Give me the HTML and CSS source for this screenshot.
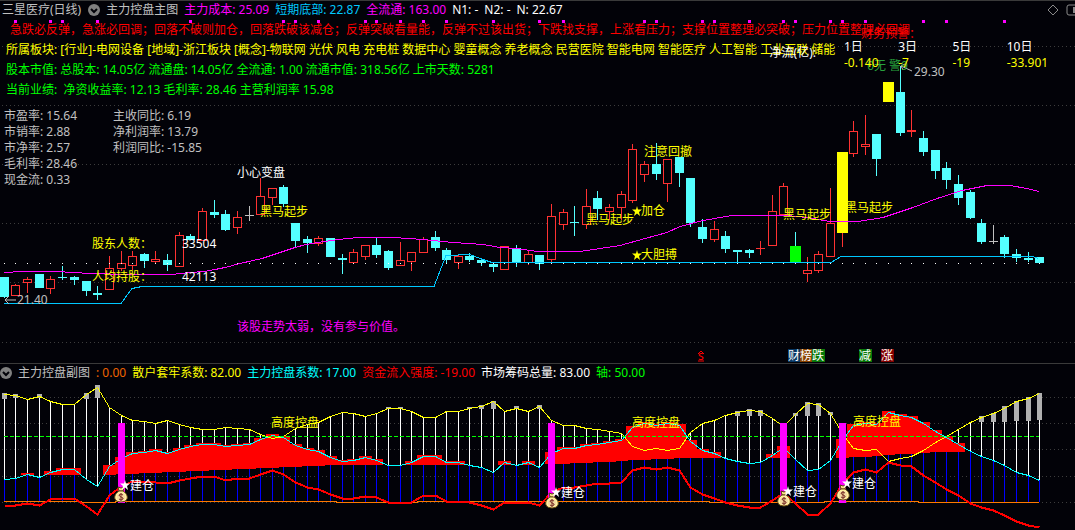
FILE: index.html
```html
<!DOCTYPE html>
<html lang="zh-CN">
<head>
<meta charset="utf-8">
<title>三星医疗 日线</title>
<link rel="stylesheet" href="styles.css">
</head>
<body>
<main class="terminal">
  <section class="panel" aria-label="主力控盘主图">
    <svg class="chart" id="price" viewBox="0 0 1075 363" role="img" aria-label="日K线">
      <g id="price-series"></g>
      <g class="arrow">
        <path d="M5 300H16M9 296L5 300L9 304"/>
        <path d="M901 66L912 71M905 64L901 66L903 70"/>
      </g>
      <g class="label gray">
        <text x="17" y="304">21.40</text>
        <text x="914" y="76">29.30</text>
      </g>
      <g class="label white"><text x="237" y="177">小心变盘</text></g>
      <g class="label yellow">
        <text x="260" y="216">黑马起步</text>
        <text x="586" y="224">黑马起步</text>
        <text x="783" y="219">黑马起步</text>
        <text x="845" y="212">黑马起步</text>
        <text x="644" y="156">注意回撤</text>
        <text x="641" y="215">加仓</text>
        <text x="641" y="259">大胆搏</text>
        <path class="star" transform="translate(637 211)" d="M0-5L1-1.500H5L2 1L3 5L0 2.500L-3 5L-2 1L-5-1.500H-1Z"/>
        <path class="star" transform="translate(637 255)" d="M0-5L1-1.500H5L2 1L3 5L0 2.500L-3 5L-2 1L-5-1.500H-1Z"/>
      </g>
      <g class="label magenta"><text x="237" y="331">该股走势太弱，没有参与价值。</text></g>
      <g class="label red">
        <text x="698" y="360">s</text>
        <path class="caret" d="M698 354L701 351L704 354M698 361H704"/>
      </g>
      <g class="tags">
        <rect x="788" y="349" width="12" height="13" fill="#073763"/>
        <rect x="800" y="349" width="12" height="13" fill="#8a4300"/>
        <rect x="812" y="349" width="13" height="13" fill="#087808"/>
        <rect x="859" y="349" width="13" height="13" fill="#087808"/>
        <rect x="881" y="349" width="13" height="13" fill="#820000"/>
        <g class="label white">
          <text x="788" y="360">财</text><text x="800" y="360">榜</text><text x="812" y="360">跌</text>
          <text x="859" y="360">减</text><text x="881" y="360">涨</text>
        </g>
      </g>
    </svg>

    <div class="overlay">
      <header class="legend">
        <h1 class="name gray">三星医疗(日线)</h1>
        <button class="toggle" type="button" aria-label="指标菜单"><svg viewBox="0 0 12 12"><circle cx="6" cy="6" r="6"/><path d="M3 5L6 8L9 5"/></svg></button>
        <span class="gray">主力控盘主图</span>
        <span class="magenta">主力成本: 25.09</span>
        <span class="sky">短期底部: 22.87</span>
        <span class="magenta">全流通: 163.00</span>
        <span class="white">N1: -</span>
        <span class="white">N2: -</span>
        <span class="white">N: 22.67</span>
        <span class="tools">
          <button class="tool" type="button" aria-label="标记"><svg width="12" height="12" viewBox="0 0 12 12"><path d="M6 1L11 6L6 11L1 6Z"/></svg></button>
          <button class="tool" type="button" aria-label="侧栏"><svg width="9" height="12" viewBox="0 0 9 12"><path d="M10 1H3Q1 1 1 3V9Q1 11 3 11H10"/><path class="solid" d="M7 3H9V9H7Z"/></svg></button>
        </span>
      </header>
      <div class="notes">
        <p class="slogan red">急跌必反弹，急涨必回调；回落不破则加仓，回落跌破该减仓；反弹突破看量能，反弹不过该出货；下跌找支撑，上涨看压力；支撑位置整理必突破；压力位置整理必回调</p>
        <p class="yellow">所属板块: [行业]-电网设备 [地域]-浙江板块 [概念]-物联网 光伏 风电 充电桩 数据中心 婴童概念 养老概念 民营医院 智能电网 智能医疗 人工智能 工业互联 储能</p>
        <p class="green">股本市值: 总股本: 14.05亿 流通盘: 14.05亿 全流通: 1.00 流通市值: 318.56亿 上市天数: 5281</p>
        <p class="green">当前业绩:&nbsp; 净资收益率: 12.13 毛利率: 28.46 主营利润率 15.98</p>
      </div>
      <div class="ratios gray">
        <ul>
          <li>市盈率: 15.64</li><li>市销率: 2.88</li><li>市净率: 2.57</li><li>毛利率: 28.46</li><li>现金流: 0.33</li>
        </ul>
        <ul>
          <li>主收同比: 6.19</li><li>净利润率: 13.79</li><li>利润同比: -15.85</li>
        </ul>
      </div>
      <dl class="holders">
        <dt class="yellow">股东人数：</dt><dd class="white">33504</dd>
        <dt class="yellow">人均持股：</dt><dd class="white">42113</dd>
      </dl>
    </div>

    <p class="warning red">财务预警：</p>
    <p class="warning-state">0无 警9</p>
    <p class="flow-title white">净流(亿):</p>
    <table class="flow">
      <thead class="white"><tr><th>1日</th><th>3日</th><th>5日</th><th>10日</th></tr></thead>
      <tbody class="yellow"><tr><td>-0.140</td><td>-7</td><td>-19</td><td>-33.901</td></tr></tbody>
    </table>
  </section>

  <section class="panel sub" aria-label="主力控盘副图">
    <svg class="chart" id="control" viewBox="0 363 1075 167" role="img" aria-label="控盘系数">
      <defs>
        <g id="bag">
          <path d="M-3-8Q0-6 3-8L2-4H-2Z" fill="#ffe98a" stroke="#5a4010"/>
          <path d="M-2-4H2C5-2 7 1 6 4Q5 7 0 7Q-5 7-6 4C-7 1-5-2-2-4Z" fill="#fff0a0" stroke="#6b4d15"/>
          <circle cx="0" cy="2" r="4" fill="#f3d9a0"/>
          <path d="M2 0Q0-2-2 0Q-2 1 0 2Q3 3 2 4Q0 6-2 4M0-2V6" fill="none" stroke="#7a3028"/>
        </g>
      </defs>
      <g id="control-series"></g>
      <g class="label yellow">
        <text x="271" y="427">高度控盘</text>
        <text x="632" y="427">高度控盘</text>
        <text x="853" y="426">高度控盘</text>
      </g>
      <use href="#bag" x="121" y="495"/><use href="#bag" x="552" y="501"/>
      <use href="#bag" x="784" y="499"/><use href="#bag" x="843" y="493"/>
      <g class="label white">
        <text x="130" y="490">建仓</text><text x="561" y="497">建仓</text>
        <text x="793" y="496">建仓</text><text x="852" y="488">建仓</text>
        <path class="star" transform="translate(125 485)" d="M0-5L1-1.500H5L2 1L3 5L0 2.500L-3 5L-2 1L-5-1.500H-1Z"/>
        <path class="star" transform="translate(556 492)" d="M0-5L1-1.500H5L2 1L3 5L0 2.500L-3 5L-2 1L-5-1.500H-1Z"/>
        <path class="star" transform="translate(788 491)" d="M0-5L1-1.500H5L2 1L3 5L0 2.500L-3 5L-2 1L-5-1.500H-1Z"/>
        <path class="star" transform="translate(847 483)" d="M0-5L1-1.500H5L2 1L3 5L0 2.500L-3 5L-2 1L-5-1.500H-1Z"/>
      </g>
    </svg>
    <div class="overlay">
      <header class="legend">
        <button class="toggle" type="button" aria-label="副图菜单"><svg viewBox="0 0 12 12"><circle cx="6" cy="6" r="6"/><path d="M3 5L6 8L9 5"/></svg></button>
        <span class="gray">主力控盘副图</span>
        <span class="orange">: 0.00</span>
        <span class="yellow">散户套牢系数: 82.00</span>
        <span class="cyan">主力控盘系数: 17.00</span>
        <span class="red">资金流入强度: -19.00</span>
        <span class="white">市场筹码总量: 83.00</span>
        <span class="green">轴: 50.00</span>
      </header>
    </div>
  </section>
</main>
<script src="chart.js"></script>
</body>
</html>
```
FILE: styles.css
```css
* { box-sizing: border-box; }
body {
  margin: 0;
  background: #020208;
  font-family: "Noto Sans", "Noto Sans CJK SC", sans-serif;
  font-size: 12px;
  line-height: 20px;
  overflow-x: hidden;
}
h1, p, ul, dl, dd { margin: 0; padding: 0; font-size: 12px; font-weight: 400; }
ul { list-style: none; }

.gray { color: #c0c0c0; fill: #c0c0c0; }
.white { color: #fff; fill: #fff; }
.yellow { color: #ff0; fill: #ff0; }
.green { color: #0f0; fill: #0f0; }
.red { color: #f00; fill: #f00; }
.magenta { color: #f0f; fill: #f0f; }
.cyan { color: #0ff; fill: #0ff; }
.sky { color: #00c8ff; fill: #00c8ff; }
.orange { color: #f06400; fill: #f06400; }

.panel { position: relative; display: grid; box-shadow: inset 0 1px #3a3a3a; }
.chart, .overlay { grid-area: 1 / 1; }
.chart { display: block; width: 100%; height: auto; }
.overlay { min-width: 0; white-space: nowrap; }

.legend { display: flex; align-items: center; gap: 6px; height: 20px; padding-left: 2px; }
.sub .legend { padding-left: 0; }
.toggle { width: 12px; height: 12px; padding: 0; border: 0; background: none; }
.name + .toggle { margin-left: 1px; }
.toggle svg { display: block; width: 12px; height: 12px; }
.toggle circle { fill: #808080; }
.toggle path { fill: none; stroke: #020208; stroke-width: 2; }
.tools { display: flex; gap: 7px; margin-left: auto; }
.tool { padding: 0; border: 0; background: none; }
.tool svg { display: block; }
.tool path { fill: none; stroke: #8a8a8a; }
.tool .solid { fill: #8a8a8a; stroke: none; }

.notes { padding-left: 6px; overflow: hidden; }
.notes .slogan { padding-left: 4px; }
.ratios { display: grid; grid-template-columns: 109px 1fr; padding: 8px 4px 0; line-height: 16px; }
.holders { display: grid; grid-template-columns: 90px 1fr; row-gap: 13px; padding: 46px 0 0 92px; }
.holders dt, .warning { font-family: "Noto Sans", "Noto Sans CJK TC", sans-serif; }

.warning, .warning-state, .flow-title, .flow { position: absolute; white-space: nowrap; }
.warning { right: 154px; top: 24px; }
.warning-state { right: 167px; top: 56px; color: #28a03c; }
.flow-title { right: 259px; top: 43px; }
.flow { right: 14px; top: 39px; width: 217px; table-layout: fixed; border-collapse: collapse; line-height: 16px; }
.flow th, .flow td { padding: 0; font-weight: 400; text-align: left; width: 54px; }

.label { font-size: 12px; }
.star { stroke: none; }
.caret { fill: none; stroke: #f00; }
.arrow { fill: none; stroke: #c0c0c0; }
#price-series, #control-series { shape-rendering: crispEdges; }
.grid { fill: none; stroke: #3c3c3c; stroke-dasharray: 1 3; }
.line { fill: none; stroke-width: 1; }
```
FILE: chart.js
```javascript
const NS = 'http://www.w3.org/2000/svg';
const STEP = 1035 / 89;
const cx = i => Math.round(4 + STEP * i + (i > 5 ? 0.3 : -0.15));
const BG = '#020208', UP = '#ff3232', DOWN = '#54ffff', FLAT = '#c0c0c0';

function add(parent, tag, attrs) {
  const el = document.createElementNS(NS, tag);
  for (const k in attrs) el.setAttribute(k, attrs[k]);
  parent.appendChild(el);
  return el;
}
const rect = (p, x, y, width, height, fill) => add(p, 'rect', { x, y, width, height, fill });
const line = (p, pts, stroke, width = 1) =>
  add(p, 'polyline', { points: pts.map(q => `${q[0]},${q[1]}`).join(' '), class: 'line', stroke, style: `stroke-width:${width}` });
const grid = (p, y) => add(p, 'path', { d: `M2 ${y + 0.5}H1075`, class: 'grid' });

// kind, high, body top, body bottom, low
const candles = `d277,277,297,298 u284,285,296,296 u277,279,283,293 d274,274,288,288 u276,279,289,294 d266,277,278,280
d276,277,280,285 d281,281,291,296 d286,293,295,300 u256,268,290,290 u251,263,269,271 u251,256,266,270
d253,254,261,268 u251,259,262,263 d254,260,265,271 u232,235,267,267 d234,236,240,240 u208,211,241,241
d200,212,215,218 d210,214,230,231 u211,217,228,234 f206,215,216,221 u178,196,215,215 u188,188,198,205
d185,187,204,207 d223,223,241,247 d236,239,243,253 u236,238,244,246 d238,238,257,257 d254,258,260,274
u249,252,263,263 u245,245,257,260 d238,245,255,258 d250,251,268,270 u242,260,266,266 u252,252,262,271
u237,239,253,253 d231,237,248,251 d248,250,260,264 u255,256,263,269 d253,256,260,262 d258,260,263,266
d263,264,267,272 u246,246,270,270 d245,248,263,267 u251,254,263,265 d255,255,264,270 u204,216,260,263
u209,212,225,230 d206,222,223,236 u189,206,225,229 d191,198,209,220 u204,207,212,220 u191,194,208,220
u144,149,201,203 u161,164,175,182 d143,164,174,180 u159,159,184,202 d157,157,173,187 d178,178,223,227
d219,227,239,243 u221,229,240,242 d231,236,249,253 d250,250,252,263 d249,250,253,258 u241,248,249,255
u195,211,246,246 u183,186,215,215 g232,246,262,262 u257,270,274,282 u251,254,271,273 u188,223,257,257
y152,152,233,247 u121,131,154,157 u115,144,147,155 d134,134,159,176 y82,82,102,102 d66,92,133,136
u110,130,132,137 d131,138,152,156 d150,150,171,179 d162,168,180,189 d175,184,198,205 d190,192,218,219
d219,223,242,244 f225,241,242,244 d235,237,254,258 d249,254,258,262 d252,258,260,262 d257,257,263,263`
  .split(/\s+/).map(s => [s[0], ...s.slice(1).split(',').map(Number)]);

const price = document.getElementById('price-series');
[46, 105, 164, 223, 282, 342].forEach(y => grid(price, y));
[1, 4, 5, 8, 16, 24, 25, 27, 31, 32, 34, 36, 38, 42, 46, 48, 55, 56, 60, 61, 64, 67, 68, 71, 72, 74, 79, 81, 86]
  .forEach(i => rect(price, cx(i) - 1, 20, 3, 3, '#f0f'));

candles.forEach(([k, hi, top, bot, lo], i) => {
  const x = cx(i);
  const wick = { u: UP, y: UP, f: FLAT }[k] || DOWN;
  rect(price, x, hi, 1, lo - hi, wick);
  if (k === 'g' || k === 'y') {
    rect(price, x - 5, top, 11, bot - top, k === 'g' ? '#0f0' : '#ff0');
  } else if (k === 'u' && bot - top > 2) {
    add(price, 'rect', { x: x - 3.5, y: top + 0.5, width: 8, height: bot - top - 1, fill: BG, stroke: UP });
  } else {
    rect(price, x - 4, top, 9, bot - top, wick);
  }
});

line(price, [[4,272],[22,271],[57,271],[90,273],[130,274],[172,274],[190,272],[205,271],[225,267],[240,263],[262,258],
  [280,252],[295,247],[306,244],[318,242],[338,239],[358,237],[393,237],[423,239],[453,242],[483,244],[500,247],[517,248],
  [537,251],[580,251],[600,248],[620,245],[645,238],[667,232],[680,226],[703,220],[732,215],[787,215],[807,217],[830,221],
  [858,221],[883,217],[913,207],[937,198],[962,190],[987,185],[1010,185],[1027,188],[1039,191]].map(([x, y]) => [x, y + 0.5]), '#f0f');
line(price, [[4,303],[121,303],[132,288],[142,286],[434,286],[446,255],[470,254],[480,258],[492,262],[831,262],[841,256],
  [1033,256],[1038,258]].map(([x, y]) => [x, y + 0.5]), '#00c8ff');
candles.forEach((c, i) => rect(price, cx(i), 263, 1, 1, '#fff'));

const holders = [394,395,399,396,401,404,404,394,387,407,415,420,421,423,420,424,427,429,429,427,428,429,434,438,436,428,
  424,422,416,412,413,416,413,408,408,411,417,417,411,411,408,406,401,411,408,411,406,420,425,425,428,429,431,433,446,450,
  448,450,448,432,423,420,415,412,410,411,418,426,414,403,404,413,433,448,450,449,461,458,456,450,442,436,429,422,417,413,
  408,401,398,393];
const control = holders.map(y => 873 - y);
const inflow = [505,505,503,505,499,498,498,506,514,495,486,481,481,482,483,480,478,476,476,480,478,478,474,470,474,482,
  487,489,494,498,498,496,497,502,502,502,495,495,501,501,502,505,509,502,503,502,505,492,487,487,485,483,483,482,470,467,
  469,467,470,487,494,498,502,505,507,507,500,493,503,514,514,503,483,472,469,472,462,465,466,475,482,489,495,503,507,510,
  515,521,525,527];
const baseStops = [[0,475],[9,475],[24,467],[29,465],[46,465],[58,458],[72,458],[80,452],[89,450]];
const base = i => {
  const n = baseStops.findIndex(s => s[0] >= i);
  if (n <= 0) return baseStops[0][1];
  const [a, ya] = baseStops[n - 1], [b, yb] = baseStops[n];
  return Math.round(ya + (yb - ya) * (i - a) / (b - a));
};

const sub = document.getElementById('control-series');
[397, 423, 449, 476, 502].forEach(y => grid(sub, y));
control.forEach((c, i) => {
  const x = cx(i), b = base(i);
  if (i !== 7 && i !== 8) rect(sub, x, Math.max(c, b), 1, 502 - Math.max(c, b), '#00f');
  if (holders[i] < c) rect(sub, x, holders[i], 1, c - holders[i], '#fff');
});
control.forEach((c, i) => {
  if (c < base(i)) rect(sub, cx(i) - 6, c - 1, 13, base(i) - c + 1, '#f00');
});
[[0,393,399],[1,394,398],[3,394,398],[7,393,399],[8,385,398],[33,407,409],[34,407,409],[40,407,409],[41,405,409],
 [42,401,409],[44,406,409],[46,405,409],[63,411,416],[64,409,416],[65,410,416],[68,413,416],[69,402,416],[70,403,416],
 [71,412,415],[84,416,422],[85,413,422],[86,406,422],[87,401,421],[88,397,421],[89,393,420]]
  .forEach(([i, a, b]) => rect(sub, cx(i) - 2, a, 5, b - a, '#b0b0b0'));

const path = ys => ys.map((y, i) => [cx(i) + 0.5, y + 0.5]);
line(sub, path(holders), '#ff0');
line(sub, path(control), '#0ff');
add(sub, 'path', { d: 'M4 436.500H1039', class: 'line', stroke: '#0f0', 'stroke-dasharray': '4 2' });
line(sub, [[4,501.5],[81,501.5],[81,502.5],[115,502.5],[115,501.5],[336,501.5],[336,502.5],[417,502.5],[417,501.5],
  [709,501.5],[709,502.5],[824,502.5],[824,501.5],[918,501.5],[918,502.5],[1039,502.5]], '#ff7800');
line(sub, path(inflow), '#f00', 2);
[10, 47, 67, 72].forEach(i => rect(sub, cx(i) - 3, 423, 7, 80, '#f0f'));
```
